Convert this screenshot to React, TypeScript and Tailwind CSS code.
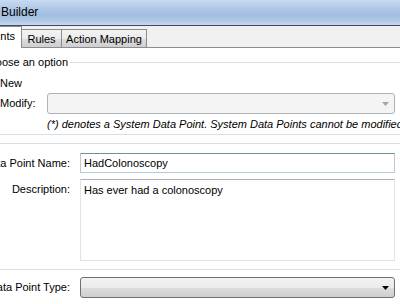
import React from "react";

function Arrow({ color }: { color: string }) {
  return (
    <svg width="7" height="4" viewBox="0 0 7 4" className="block">
      <polygon points="0,0 7,0 3.5,4" fill={color} />
    </svg>
  );
}

export default function App() {
  return (
    <div className="w-[400px] h-[304px] overflow-hidden bg-white text-[11px] leading-[13px] text-black font-['Liberation_Sans',Arial,sans-serif]">
      {/* title bar */}
      <div className="h-[25px] bg-[linear-gradient(180deg,#c9daf0_0%,#b3cbe9_30%,#a2bde1_60%,#aec7e6_80%,#c6d8ef_100%)] flex items-start">
        <span className="pl-px pt-[5px] text-[12px] leading-[14px] text-black">Builder</span>
      </div>
      <div className="h-px bg-[#3e4b5c]" />
      {/* tab strip */}
      <div className="h-[21px] bg-[#f0f0f0] flex items-end">
        <div className="w-[22px] h-[22px] -mb-px bg-white border-r border-t border-[#898c95] flex justify-end items-center overflow-hidden z-10 relative">
          <span className="whitespace-nowrap pr-[6px] pb-[2px]">Data Points</span>
        </div>
        <div className="w-[40px] h-[18px] border-t border-r border-[#898c95] bg-[linear-gradient(180deg,#f3f3f3_0%,#ebebeb_50%,#dddddd_51%,#cfcfcf_100%)] flex items-center justify-center">
          <span className="pt-[1px]">Rules</span>
        </div>
        <div className="w-[85px] h-[18px] border-t border-r border-[#898c95] bg-[linear-gradient(180deg,#f3f3f3_0%,#ebebeb_50%,#dddddd_51%,#cfcfcf_100%)] flex items-center justify-center">
          <span className="pt-[1px]">Action Mapping</span>
        </div>
      </div>
      <div className="h-px bg-[#898c95]" />
      {/* content */}
      <div className="flex flex-col">
        {/* group 1 */}
        <div className="mt-[7px] h-[14px] flex items-center">
          <div className="w-[68px] flex justify-end overflow-hidden">
            <span className="whitespace-nowrap">Choose an option</span>
          </div>
          <div className="flex-1 h-px bg-[#d5dfe5] ml-[2px]" />
        </div>
        <div className="mt-[7px] h-[14px] flex items-center">
          <span>New</span>
        </div>
        <div className="mt-[3px] h-[21px] flex items-center">
          <span className="w-[47px]">Modify:</span>
          <div className="w-[348px] h-[21px] rounded-[3px] border border-[#adb2b5] bg-[#f4f4f4] flex items-center justify-end pr-[5px]">
            <Arrow color="#a4a4a4" />
          </div>
        </div>
        <div className="mt-[3px] h-[14px] flex items-center pl-[47px]">
          <span className="italic whitespace-nowrap">(*) denotes a System Data Point. System Data Points cannot be modified.</span>
        </div>
        <div className="mt-[3px] h-px bg-[#d5dfe5]" />
        {/* group 2 */}
        <div className="mt-[8px] h-px bg-[#d5dfe5]" />
        <div className="mt-[9px] h-[20px] flex items-center">
          <div className="w-[70px] flex justify-end overflow-hidden">
            <span className="whitespace-nowrap">Data Point Name:</span>
          </div>
          <div className="ml-[10px] w-[315px] h-[20px] border border-[#b6ccd5] border-t-[#6e939c] bg-white flex items-center pl-[3px]">
            <span>HadColonoscopy</span>
          </div>
        </div>
        <div className="mt-[6px] flex items-start">
          <div className="w-[70px] flex justify-end overflow-hidden pt-[4px]">
            <span className="whitespace-nowrap">Description:</span>
          </div>
          <div className="ml-[10px] w-[315px] h-[82px] border border-[#e2e3ea] border-t-[#abadb3] bg-white pl-[3px] pt-[4px]">
            <span>Has ever had a colonoscopy</span>
          </div>
        </div>
        <div className="mt-[8px] h-px bg-[#d5dfe5]" />
        <div className="mt-[7px] h-[21px] flex items-center">
          <div className="w-[70px] flex justify-end overflow-hidden">
            <span className="whitespace-nowrap">Data Point Type:</span>
          </div>
          <div className="ml-[10px] w-[315px] h-[21px] rounded-[3px] border border-[#707070] bg-[linear-gradient(180deg,#f2f2f2_0%,#ebebeb_50%,#dddddd_51%,#cfcfcf_100%)] flex items-center justify-end pr-[5px]">
            <Arrow color="#000000" />
          </div>
        </div>
      </div>
    </div>
  );
}
